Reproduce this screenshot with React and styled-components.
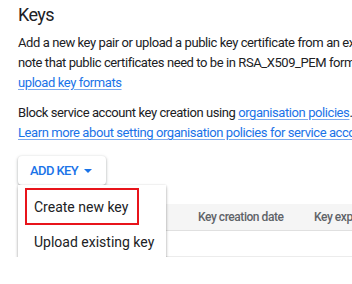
import React from "react";
import styled, { createGlobalStyle } from "styled-components";

const GlobalStyle = createGlobalStyle`
  html, body {
    margin: 0;
    padding: 0;
    background: #ffffff;
    overflow: hidden;
  }
  body {
    font-family: Roboto, "Liberation Sans", Arial, sans-serif;
    color: #202124;
    -webkit-font-smoothing: antialiased;
  }
`;

const Page = styled.div`
  width: 720px;
  padding: 3px 0 0 18px;
`;

const Title = styled.h2`
  margin: 0;
  font-size: 18px;
  font-weight: 400;
  line-height: 24px;
  letter-spacing: -0.6px;
  color: #202124;
`;

const Text = styled.p`
  margin: ${(p) => p.$top || 0}px 0 0;
  font-size: 13px;
  line-height: 20px;
  white-space: nowrap;
  letter-spacing: -0.42px;
`;

const Link = styled.a`
  color: #1a73e8;
  text-decoration: underline;
  text-decoration-color: #7baaf0;
  text-underline-offset: 2px;
  cursor: pointer;
`;

const MenuAnchor = styled.div`
  position: relative;
  display: inline-block;
  margin-top: 13px;
`;

const AddButton = styled.button`
  display: flex;
  align-items: center;
  gap: 6px;
  height: 29px;
  padding: 0 14px 0 12px;
  border: none;
  border-radius: 4px;
  background: #ffffff;
  box-shadow: 0 1px 2px rgba(60, 64, 67, 0.3), 0 1px 3px 1px rgba(60, 64, 67, 0.15);
  font-family: inherit;
  font-size: 13px;
  font-weight: 500;
  letter-spacing: -0.6px;
  color: #1a73e8;
  cursor: pointer;
`;

const Caret = styled.svg`
  width: 8px;
  height: 4px;
  fill: #1a73e8;
`;

const Menu = styled.div`
  position: absolute;
  top: 100%;
  left: 0;
  z-index: 2;
  width: 148px;
  padding: 4px 0 1px;
  background: #ffffff;
  box-shadow: 0 2px 3px rgba(0, 0, 0, 0.3), 0 0 2px rgba(0, 0, 0, 0.12);
`;

const MenuItem = styled.div`
  display: flex;
  align-items: center;
  height: 35px;
  padding-left: 16px;
  font-size: 14px;
  color: #202124;
  white-space: nowrap;
`;

const Marked = styled.span`
  display: inline-flex;
  align-items: center;
  height: 37px;
  margin-left: -9px;
  padding: 0 9px 0 7px;
  border: 2px solid #e8141b;
  box-sizing: border-box;
`;

const Table = styled.div`
  margin-top: 19px;
  width: 700px;
`;

const Row = styled.div`
  display: grid;
  grid-template-columns: 172px 116px 116px 1fr;
  height: ${(p) => (p.$head ? 26 : 25)}px;
  background: ${(p) => (p.$head ? "#f5f5f5" : "#ffffff")};
  border-bottom: 1px solid ${(p) => (p.$head ? "#e0e0e0" : "#ececec")};
`;

const HeadCell = styled.div`
  display: flex;
  align-items: center;
  padding-left: 8px;
  font-size: 12px;
  font-weight: 500;
  letter-spacing: -0.45px;
  color: #5f6368;
  white-space: nowrap;
`;

export default function App() {
  return (
    <>
      <GlobalStyle />
      <Page>
        <Title>Keys</Title>
        <Text $top={6}>
          Add a new key pair or upload a public key certificate from an existing key pair. Please
          <br />
          note that public certificates need to be in RSA_X509_PEM format. Learn more about
          <br />
          <Link>upload key formats</Link>
        </Text>
        <Text $top={10}>
          Block service account key creation using <Link>organisation policies</Link>.
          <br />
          <Link>Learn more about setting organisation policies for service accounts</Link>
        </Text>
        <MenuAnchor>
          <AddButton>
            ADD KEY
            <Caret viewBox="0 0 8 4">
              <path d="M0 0 L8 0 L4 4 Z" />
            </Caret>
          </AddButton>
          <Menu>
            <MenuItem>
              <Marked>Create new key</Marked>
            </MenuItem>
            <MenuItem>Upload existing key</MenuItem>
          </Menu>
        </MenuAnchor>
        <Table>
          <Row $head>
            <HeadCell>Key</HeadCell>
            <HeadCell>Key creation date</HeadCell>
            <HeadCell>Key expiration date</HeadCell>
            <HeadCell />
          </Row>
          <Row />
        </Table>
      </Page>
    </>
  );
}
